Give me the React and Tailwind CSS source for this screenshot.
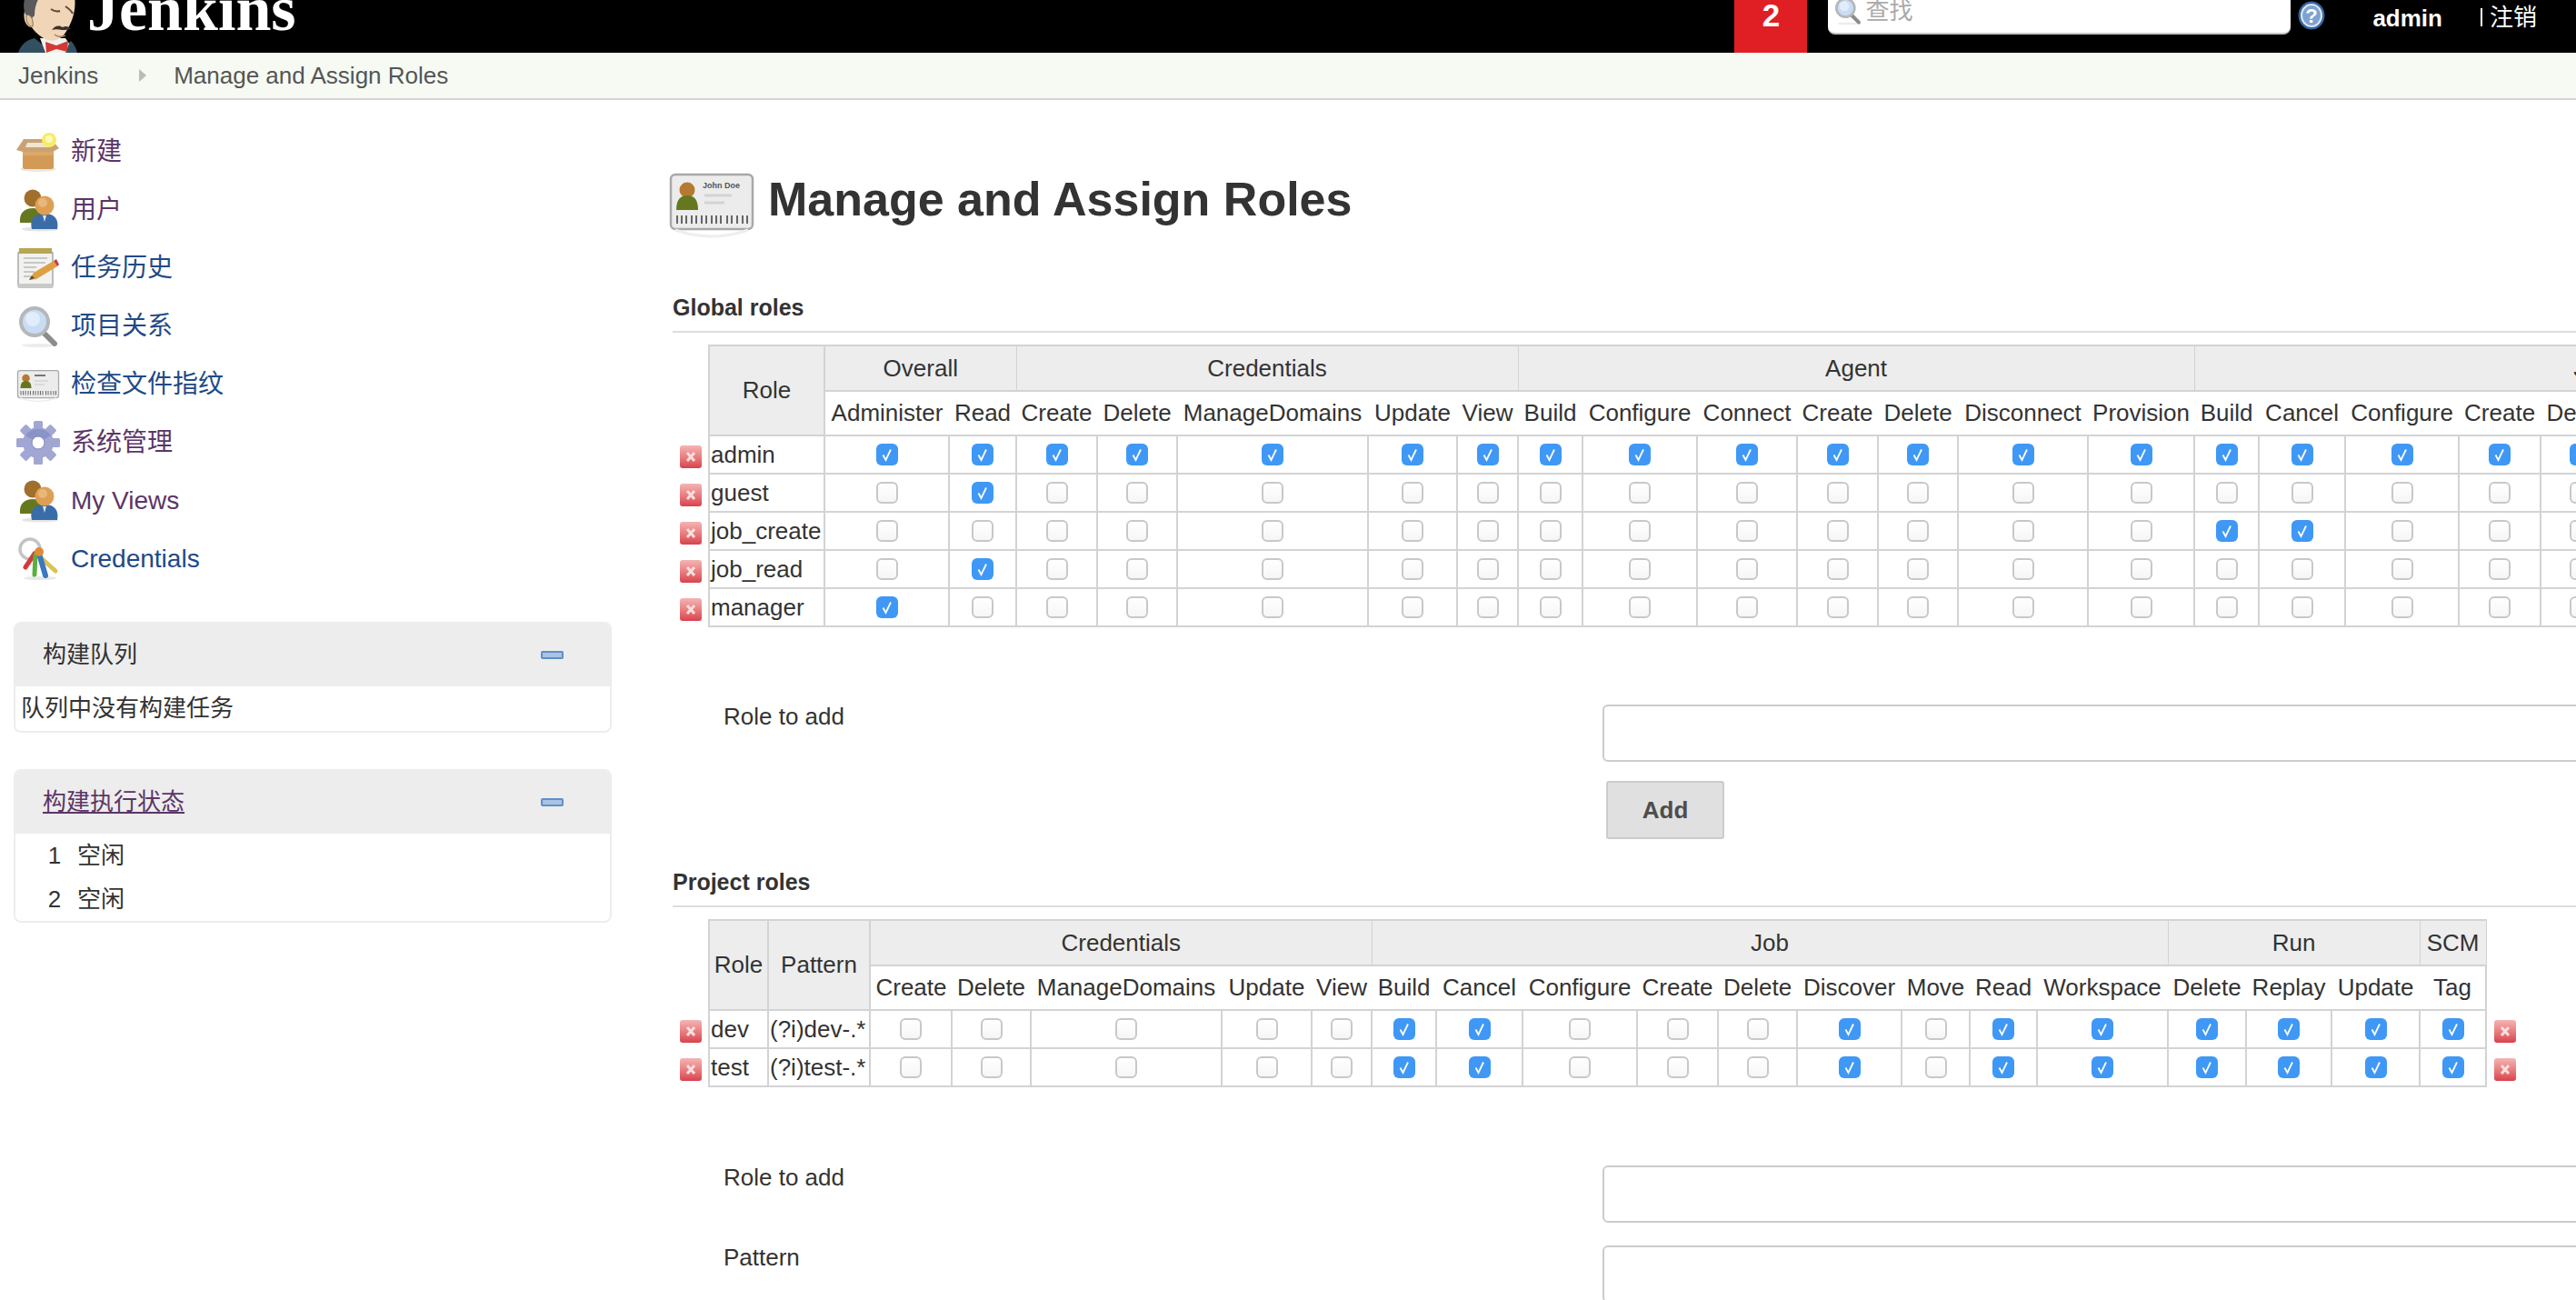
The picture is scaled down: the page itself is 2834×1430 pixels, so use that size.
import React from "react";

const Butler = () => (
  <svg width="90" height="58" viewBox="0 0 90 58" className="shrink-0">
    <path d="M10 58 C13 49 19 44 28 42 L38 50 L62 50 L68 45 C71 48 74 53 75 58 Z" fill="#335061" />
    <path d="M34 42 L62 42 L66 48 L62 58 L40 58 Z" fill="#f0f0f0" />
    <path d="M17 -4 L72 -4 C74 10 70 24 62 36 C56 45 46 47 38 42 C30 37 27 33 25 30 C19 30 15 22 17 12 Z" fill="#f0d6b7" />
    <path d="M18 -4 L34 -4 C30 2 28 9 28 17 L25 20 C22 17 20 17 18 16 C15 8 16 2 18 -4 Z" fill="#5a595c" />
    <path d="M19 17 C23 15 27 20 26 29 C22 30 18 24 19 17 Z" fill="#e8c6a0" stroke="#8a6f58" strokeWidth="1" />
    <path d="M46 10 C49 12 53 13 56 12 M62 7 C65 9 68 11 70 15" stroke="#5a4a3a" strokeWidth="2" fill="none" />
    <path d="M47 33 C51 27 56 28 59 30 C62 28 66 29 68 32 C63 33 60 33 58 33 C54 32 50 32 47 33 Z" fill="#3a3030" />
    <path d="M50 38 C54 41 58 41 62 39" stroke="#a07f60" strokeWidth="1.5" fill="none" />
    <path d="M40 46 L52 50 L65 45 L64 57 L52 54 L41 58 Z" fill="#d33833" />
  </svg>
);

const BoxIcon = () => (
  <svg width="48" height="48" viewBox="0 0 48 48">
    <ellipse cx="24" cy="43" rx="20" ry="3" fill="#e8e8e8" />
    <path d="M7 20 L41 20 L41 40 Q41 43 38 43 L10 43 Q7 43 7 40 Z" fill="#dba868" />
    <path d="M7 28 L41 28 L41 40 Q41 43 38 43 L10 43 Q7 43 7 40 Z" fill="#d39a56" />
    <path d="M0 22 L8 10 L38 10 L47 20 L40 24 L7 24 Z" fill="#c9a274" />
    <path d="M12 14 L34 14 L36 19 L10 19 Z" fill="#f0e6cf" />
    <circle cx="36" cy="11" r="8" fill="#f7ec6a" />
    <circle cx="36" cy="10" r="4" fill="#fdf9b8" />
  </svg>
);

const UsersIcon = () => (
  <svg width="48" height="48" viewBox="0 0 48 48">
    <ellipse cx="26" cy="45" rx="20" ry="2.5" fill="#e4e4e4" />
    <circle cx="18" cy="11" r="9.5" fill="#a06f2c" />
    <path d="M4 38 C3 27 9 22 18 22 C27 22 32 27 32 38 Z" fill="#66781f" />
    <path d="M17 45 C14 33 21 28 31 28 C42 28 47 34 45 45 Z" fill="#3a6da8" />
    <path d="M29 30 L31 37 L33 30 Z" fill="#dfe7ef" />
    <circle cx="31" cy="19" r="10.5" fill="#de9f55" />
    <circle cx="29" cy="16" r="5" fill="#eab77a" />
  </svg>
);

const NoteIcon = () => (
  <svg width="48" height="48" viewBox="0 0 48 48">
    <rect x="2" y="6" width="38" height="39" rx="2" fill="#f2f2ee" stroke="#a9a9a9" strokeWidth="1.5" />
    <rect x="2" y="41" width="38" height="5" fill="#c9c9c9" />
    <rect x="3" y="2" width="36" height="6" fill="#b8a652" />
    <path d="M8 13 H34 M8 18 H32 M8 23 H22 M8 28 H20 M8 33 H16" stroke="#c6c9c9" strokeWidth="2" />
    <path d="M14 37 L19 29 L41 16 L45 22 L22 36 Z" fill="#dd9f45" />
    <path d="M41 16 L45 22 L47 20 L44 14 Z" fill="#cc3b3b" />
    <path d="M14 37 L17 32 L20 35 Z" fill="#5a4a3a" />
  </svg>
);

const SearchIcon = ({ size = 48 }) => (
  <svg width={size} height={size} viewBox="0 0 48 48">
    <ellipse cx="24" cy="45" rx="18" ry="2" fill="#ececec" />
    <path d="M29 30 L42 43" stroke="#8c8c8c" strokeWidth="6" strokeLinecap="round" />
    <circle cx="20" cy="19" r="15" fill="#c9dcf6" stroke="#b4b8b8" strokeWidth="4" />
    <circle cx="18" cy="16" r="8" fill="#e2edfb" />
  </svg>
);

const CardIcon = ({ size = 48, name = false }) => (
  <svg width={size} height={size} viewBox="0 0 96 96">
    <rect x="3" y="17" width="90" height="60" rx="5" fill="#ececec" stroke="#a8a8a8" strokeWidth="2.5" />
    <path d="M8 78 Q48 92 88 78" fill="none" stroke="#eeeeee" strokeWidth="3" />
    <circle cx="21" cy="34" r="8.5" fill="#b57a2f" />
    <path d="M9 56 C9 44 14 40 21 40 C28 40 33 44 33 56 Z" fill="#66781f" />
    {name ? (
      <text x="38" y="32" fontSize="9" fontWeight="700" fill="#555" fontFamily="Liberation Sans">John Doe</text>
    ) : (
      <path d="M40 28 H64" stroke="#777" strokeWidth="4" />
    )}
    <path d="M40 40 H70 M40 48 H62" stroke="#d3d3d3" strokeWidth="3" />
    <path d="M10 62 V71 M15 62 V71 M20 62 V71 M26 62 V71 M31 62 V71 M37 62 V71 M42 62 V71 M48 62 V71 M53 62 V71 M58 62 V71 M65 62 V71 M70 62 V71 M76 62 V71 M82 62 V71 M87 62 V71" stroke="#666" strokeWidth="2" />
  </svg>
);

const GearIcon = () => (
  <svg width="48" height="48" viewBox="0 0 48 48">
    <g fill="#a1a7d2">
      {[0, 45, 90, 135, 180, 225, 270, 315].map((a) => (
        <rect key={a} x="19" y="0" width="10" height="12" rx="1.5" transform={`rotate(${a} 24 24)`} />
      ))}
      <circle cx="24" cy="24" r="17" />
    </g>
    <path d="M10 16 A17 17 0 0 1 38 16 L24 24 Z" fill="#8a93c8" />
    <circle cx="24" cy="24" r="7" fill="#ffffff" stroke="#8088b8" strokeWidth="1" />
  </svg>
);

const KeysIcon = () => (
  <svg width="48" height="48" viewBox="0 0 48 48">
    <ellipse cx="26" cy="45" rx="18" ry="2" fill="#e8e8e8" />
    <circle cx="15" cy="13" r="11" fill="none" stroke="#c4c4c4" strokeWidth="3.5" />
    <path d="M24 20 L43 37" stroke="#d9c257" strokeWidth="5" strokeLinecap="round" />
    <path d="M20 18 L10 33" stroke="#d13b3b" strokeWidth="5" strokeLinecap="round" />
    <path d="M21 19 L20 41" stroke="#5cb040" strokeWidth="5" strokeLinecap="round" />
    <path d="M25 18 L32 42" stroke="#3a78c0" strokeWidth="6" strokeLinecap="round" />
    <circle cx="25" cy="16" r="5" fill="#e08a3a" />
  </svg>
);

const navItems = [
  { label: "新建", color: "text-[#5c3566]", Icon: BoxIcon },
  { label: "用户", color: "text-[#5c3566]", Icon: UsersIcon },
  { label: "任务历史", color: "text-[#204a87]", Icon: NoteIcon },
  { label: "项目关系", color: "text-[#204a87]", Icon: SearchIcon },
  { label: "检查文件指纹", color: "text-[#204a87]", Icon: CardIcon },
  { label: "系统管理", color: "text-[#5c3566]", Icon: GearIcon },
  { label: "My Views", color: "text-[#5c3566]", Icon: UsersIcon },
  { label: "Credentials", color: "text-[#204a87]", Icon: KeysIcon },
];

const Minus = () => (
  <span className="block w-[25px] h-[9px] rounded-[2px] bg-[#a9c3e4] border-2 border-[#5f8fc7]" />
);

const Check = ({ on }) =>
  on ? (
    <span className="block mx-auto w-[24px] h-[24px] rounded-[6px] bg-[#3f98f5]">
      <svg width="24" height="24" viewBox="0 0 24 24" className="block">
        <path d="M7.5 12.5 L10.5 18 L16 6.5" fill="none" stroke="#ffffff" strokeWidth="1.8" />
      </svg>
    </span>
  ) : (
    <span className="block mx-auto w-[24px] h-[24px] rounded-[6px] border-2 border-[#c8c8c8] bg-linear-to-b from-[#ffffff] to-[#f6f6f6]" />
  );

const Del = () => (
  <span className="block mx-auto mt-[4px] w-[24px] h-[25px] rounded-[3px] bg-linear-to-b from-[#f4b4b4] to-[#d8404e]">
    <svg width="24" height="25" viewBox="0 0 24 25" className="block">
      <path d="M8 8 L16 17 M16 8 L8 17" stroke="#f7dede" strokeWidth="3" />
    </svg>
  </span>
);

const borderC = "border-[#d3d3d3]";

const RoleTable = ({ width, cols, groups, lead, rows, rightDel }) => (
  <table className={`table-fixed border-collapse text-[#333333] text-[26px] ${width}`}>
    <colgroup>
      {cols.map((c, i) => (
        <col key={i} className={c} />
      ))}
    </colgroup>
    <thead>
      <tr className="h-[50px]">
        <th rowSpan={2} />
        {lead.map((l) => (
          <th key={l} rowSpan={2} className={`font-normal border-2 ${borderC} bg-[#ededed]`}>
            {l}
          </th>
        ))}
        {groups.map((g) => (
          <th
            key={g.name}
            colSpan={g.perms.length}
            className={`font-normal whitespace-nowrap border-x border-y-2 ${borderC} bg-[#ededed]`}
          >
            {g.name}
          </th>
        ))}
        {rightDel && <th rowSpan={2} />}
      </tr>
      <tr className="h-[49px]">
        {groups.flatMap((g) => g.perms).map((p, i, all) => (
          <th
            key={i}
            className={`font-normal whitespace-nowrap border-y-2 ${borderC} ${i === all.length - 1 ? "border-r-2" : ""}`}
          >
            {p}
          </th>
        ))}
      </tr>
    </thead>
    <tbody>
      {rows.map((r) => (
        <tr key={r.cells[0]} className="h-[42px]">
          <td className="p-0">
            <Del />
          </td>
          {r.cells.map((c) => (
            <td key={c} className={`border-2 ${borderC} pl-[1px] whitespace-nowrap`}>
              {c}
            </td>
          ))}
          {groups.flatMap((g) => g.perms).map((p, i) => (
            <td key={i} className={`border-2 ${borderC} p-0`}>
              <Check on={r.checked.includes(i)} />
            </td>
          ))}
          {rightDel && (
            <td className="p-0">
              <Del />
            </td>
          )}
        </tr>
      ))}
    </tbody>
  </table>
);

const globalCols = [
  "w-[40px]", "w-[127px]", "w-[137px]", "w-[74px]", "w-[89px]", "w-[88px]", "w-[210px]", "w-[98px]", "w-[67px]",
  "w-[71px]", "w-[126px]", "w-[110px]", "w-[89px]", "w-[88px]", "w-[143px]", "w-[117px]", "w-[71px]", "w-[95px]",
  "w-[125px]", "w-[90px]", "w-[88px]", "w-[122px]", "w-[79px]", "w-[75px]", "w-[131px]",
];
const globalGroups = [
  { name: "Overall", perms: ["Administer", "Read"] },
  { name: "Credentials", perms: ["Create", "Delete", "ManageDomains", "Update", "View"] },
  { name: "Agent", perms: ["Build", "Configure", "Connect", "Create", "Delete", "Disconnect", "Provision"] },
  { name: "Job", perms: ["Build", "Cancel", "Configure", "Create", "Delete", "Discover", "Move", "Read", "Workspace"] },
];
const allGlobal = Array.from({ length: 23 }, (_, i) => i);
const globalRows = [
  { cells: ["admin"], checked: allGlobal },
  { cells: ["guest"], checked: [1] },
  { cells: ["job_create"], checked: [14, 15] },
  { cells: ["job_read"], checked: [1] },
  { cells: ["manager"], checked: [0] },
];

const projectCols = [
  "w-[40px]", "w-[65px]", "w-[112px]", "w-[90px]", "w-[87px]", "w-[210px]", "w-[99px]", "w-[66px]", "w-[71px]",
  "w-[95px]", "w-[126px]", "w-[89px]", "w-[87px]", "w-[115px]", "w-[75px]", "w-[74px]", "w-[144px]", "w-[86px]",
  "w-[94px]", "w-[97px]", "w-[73px]", "w-[40px]",
];
const projectGroups = [
  { name: "Credentials", perms: ["Create", "Delete", "ManageDomains", "Update", "View"] },
  { name: "Job", perms: ["Build", "Cancel", "Configure", "Create", "Delete", "Discover", "Move", "Read", "Workspace"] },
  { name: "Run", perms: ["Delete", "Replay", "Update"] },
  { name: "SCM", perms: ["Tag"] },
];
const projectChecked = [5, 6, 10, 12, 13, 14, 15, 16, 17];
const projectRows = [
  { cells: ["dev", "(?i)dev-.*"], checked: projectChecked },
  { cells: ["test", "(?i)test-.*"], checked: projectChecked },
];

const SectionHead = ({ children, className }) => (
  <div className={`h-[46px] pb-[6px] flex items-center border-b-2 border-[#dddddd] text-[25px] font-bold text-[#333333] ${className}`}>
    {children}
  </div>
);

const FormRow = ({ label, className = "" }) => (
  <div className={`flex items-start ${className}`}>
    <label className="w-[1023px] shrink-0 pl-[56px] h-[26px] leading-[26px] text-[26px] text-[#333333]">{label}</label>
    <input className="w-[1200px] shrink-0 h-[63px] bg-white border-2 border-[#cccccc] rounded-[6px]" />
  </div>
);

export default function App() {
  return (
    <div className="w-[2834px] h-[1430px] overflow-hidden bg-white [font-family:'Liberation_Sans','Noto_Sans_CJK_SC',sans-serif]">
      <header className="h-[58px] bg-black flex items-start overflow-hidden">
        <div className="pl-[10px]">
          <Butler />
        </div>
        <span className="ml-[-4px] -mt-[25px] text-[70px] leading-none font-bold text-white [font-family:'Liberation_Serif',serif]">
          Jenkins
        </span>
        <div className="ml-auto flex items-start">
          <div className="w-[80px] h-[58px] bg-[#e01f24] text-white font-bold text-[35px] text-center leading-[34px]">2</div>
          <div className="ml-[23px] w-[509px] h-[38px] bg-white rounded-b-[8px] border-b-2 border-[#c4c4c4] flex items-start pl-[6px]">
            <span className="-mt-[4px] h-[32px]">
              <SearchIcon size={32} />
            </span>
            <span className="ml-[3px] leading-[24px] text-[26px] text-[#aaaaaa]">查找</span>
          </div>
          <svg width="30" height="32" viewBox="0 0 30 32" className="ml-[8px] mt-[1px]">
            <ellipse cx="15" cy="16" rx="14.5" ry="15.5" fill="#3465a4" />
            <ellipse cx="15" cy="16" rx="11" ry="12" fill="#7ea3d0" stroke="#dfe8f3" strokeWidth="2" />
            <text x="15" y="24" textAnchor="middle" fontSize="22" fontWeight="700" fill="#ffffff" fontFamily="Liberation Sans">?</text>
          </svg>
          <span className="ml-[52px] leading-[40px] text-[26px] font-bold text-white">admin</span>
          <span className="ml-[42px] mt-[9px] w-[2px] h-[20px] bg-white" />
          <span className="ml-[8px] mr-[43px] leading-[38px] text-[26px] text-white">注销</span>
        </div>
      </header>

      <nav className="h-[52px] bg-[#f6faf2] border-b-2 border-[#d3d3d3] flex items-center pl-[20px] text-[26px] text-[#555555]">
        <span>Jenkins</span>
        <svg width="8" height="14" viewBox="0 0 8 14" className="ml-[45px]">
          <path d="M0 0 L8 7 L0 14 Z" fill="#bbbbbb" />
        </svg>
        <span className="ml-[30px]">Manage and Assign Roles</span>
      </nav>

      <div className="flex">
        <aside className="w-[740px] shrink-0 pt-[25px]">
          <ul>
            {navItems.map(({ label, color, Icon }) => (
              <li key={label} className={`h-[64px] flex items-center pl-[18px] gap-[12px] text-[28px] ${color}`}>
                <span className="w-[48px] h-[48px] shrink-0">
                  <Icon />
                </span>
                {label}
              </li>
            ))}
          </ul>
          <section className="ml-[15px] mt-[37px] w-[658px] border-2 border-[#ededed] rounded-[8px] overflow-hidden text-[26px] text-[#333333]">
            <div className="h-[69px] bg-[#ededed] flex items-center justify-between pl-[30px] pr-[51px]">
              <span>构建队列</span>
              <Minus />
            </div>
            <div className="h-[49px] flex items-center pl-[6px]">队列中没有构建任务</div>
          </section>
          <section className="ml-[15px] mt-[40px] w-[658px] border-2 border-[#ededed] rounded-[8px] overflow-hidden text-[26px] text-[#333333]">
            <div className="h-[69px] bg-[#ededed] flex items-center justify-between pl-[30px] pr-[51px]">
              <span className="underline text-[#5c3566]">构建执行状态</span>
              <Minus />
            </div>
            {["1", "2"].map((n) => (
              <div key={n} className="h-[48px] flex items-center pl-[28px]">
                <span className="w-[30px] text-center">{n}</span>
                <span className="ml-[10px]">空闲</span>
              </div>
            ))}
          </section>
        </aside>

        <main className="flex-1 min-w-0">
          <div className="mt-[65px] h-[96px] flex items-center -ml-[5px]">
            <CardIcon size={96} name />
            <h1 className="ml-[14px] pb-[8px] text-[52px] font-bold text-[#333333] leading-none whitespace-nowrap">Manage and Assign Roles</h1>
          </div>

          <SectionHead className="mt-[49px]">Global roles</SectionHead>
          <div className="mt-[13px]">
            <RoleTable width="w-[2550px]" cols={globalCols} groups={globalGroups} lead={["Role"]} rows={globalRows} />
          </div>
          <FormRow label="Role to add" className="mt-[85px]" />
          <button className="block ml-[1027px] mt-[21px] w-[130px] h-[64px] bg-[#e0e0e0] border-2 border-[#cccccc] rounded-[3px] text-[26px] font-bold text-[#4d4d4d]">
            Add
          </button>

          <SectionHead className="mt-[29px]">Project roles</SectionHead>
          <div className="mt-[13px]">
            <RoleTable width="w-[2035px]" cols={projectCols} groups={projectGroups} lead={["Role", "Pattern"]} rows={projectRows} rightDel />
          </div>
          <FormRow label="Role to add" className="mt-[86px]" />
          <FormRow label="Pattern" className="mt-[25px]" />
        </main>
      </div>
    </div>
  );
}
